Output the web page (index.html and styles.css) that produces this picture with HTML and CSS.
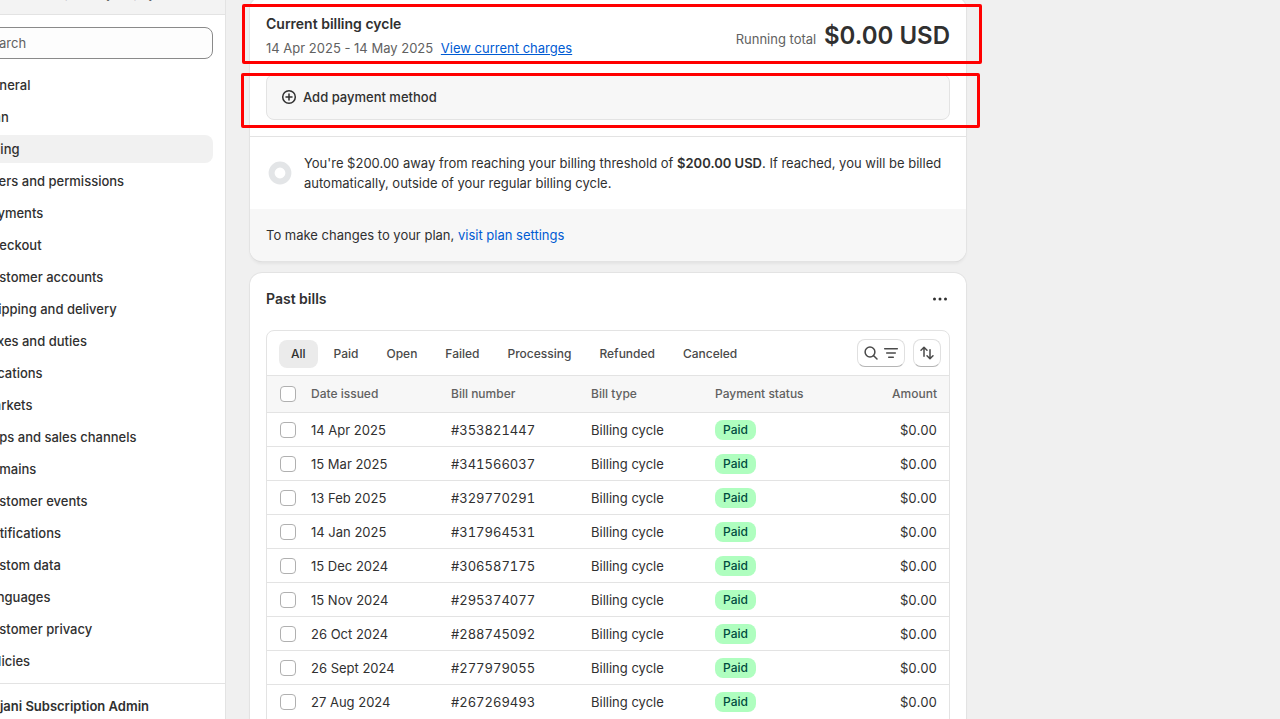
FILE: index.html
```html
<!DOCTYPE html>
<html lang="en">
<head>
  <meta charset="UTF-8" />
  <title>Settings - Billing</title>
  <meta name="viewport" content="width=device-width, initial-scale=1" />
  <link rel="stylesheet" href="styles.css">
</head>
<body>
  <div class="layout">
    <aside class="sidebar">
      <div class="store">shopdev.myshopify.com</div>
      <div class="search">
        <input type="text" aria-label="Search" placeholder="Search" />
      </div>
      <nav class="menu">
        <a href="#">General</a>
        <a href="#">Plan</a>
        <a href="#" class="active">Billing</a>
        <a href="#">Users and permissions</a>
        <a href="#">Payments</a>
        <a href="#">Checkout</a>
        <a href="#">Customer accounts</a>
        <a href="#">Shipping and delivery</a>
        <a href="#">Taxes and duties</a>
        <a href="#">Locations</a>
        <a href="#">Markets</a>
        <a href="#">Apps and sales channels</a>
        <a href="#">Domains</a>
        <a href="#">Customer events</a>
        <a href="#">Notifications</a>
        <a href="#">Custom data</a>
        <a href="#">Languages</a>
        <a href="#">Customer privacy</a>
        <a href="#">Policies</a>
      </nav>
      <div class="user">Rajani Subscription Admin</div>
    </aside>

    <main class="content">
      <section class="card cycle">
        <div class="cycle-head">
          <div>
            <h2>Current billing cycle</h2>
            <p class="dates"><span>14 Apr 2025 - 14 May 2025</span> <a href="#">View current charges</a></p>
          </div>
          <p class="total"><span>Running total</span> <strong>$0.00 USD</strong></p>
        </div>
        <button type="button" class="add-payment">
          <svg viewBox="0 0 16 16" width="16" height="16" fill="none" stroke="currentColor" stroke-width="1.5" stroke-linecap="round">
            <circle cx="8" cy="8" r="6.3" />
            <path d="M8 5v6M5 8h6" />
          </svg>
          Add payment method
        </button>
        <div class="threshold">
          <svg class="ring" viewBox="0 0 24 24" width="24" height="24" fill="none" stroke="#e3e5e7" stroke-width="6">
            <circle cx="12" cy="12" r="8.4" />
          </svg>
          <p>You're $200.00 away from reaching your billing threshold of <strong>$200.00 USD</strong>. If reached, you will be billed automatically, outside of your regular billing cycle.</p>
        </div>
        <div class="plan-note">To make changes to your plan, <a href="#">visit plan settings</a></div>
        <div class="mark mark-cycle"></div>
        <div class="mark mark-payment"></div>
      </section>

      <section class="card bills">
        <div class="bills-head">
          <h2>Past bills</h2>
          <button type="button" class="more" aria-label="More actions">
            <svg viewBox="0 0 20 20" width="20" height="20" fill="currentColor">
              <circle cx="4.5" cy="10" r="1.5" />
              <circle cx="10" cy="10" r="1.5" />
              <circle cx="15.5" cy="10" r="1.5" />
            </svg>
          </button>
        </div>
        <div class="panel">
          <div class="toolbar">
            <div class="tabs">
              <button type="button" class="selected">All</button>
              <button type="button">Paid</button>
              <button type="button">Open</button>
              <button type="button">Failed</button>
              <button type="button">Processing</button>
              <button type="button">Refunded</button>
              <button type="button">Canceled</button>
            </div>
            <div class="tools">
              <button type="button" aria-label="Search and filter">
                <svg viewBox="0 0 20 20" width="20" height="20" fill="none" stroke="currentColor" stroke-width="1.5" stroke-linecap="round">
                  <circle cx="9" cy="9" r="4.9" />
                  <path d="M12.7 12.7L16 16" />
                </svg>
                <svg viewBox="0 0 20 20" width="20" height="20" fill="none" stroke="currentColor" stroke-width="1.5" stroke-linecap="round">
                  <path d="M3.7 5.7h12.6M5.7 10h8.6M7.7 14.3h4.6" />
                </svg>
              </button>
              <button type="button" aria-label="Sort">
                <svg viewBox="0 0 20 20" width="20" height="20" fill="none" stroke="currentColor" stroke-width="1.5" stroke-linecap="round" stroke-linejoin="round">
                  <path d="M4 7.3L7 4.3L10 7.3M7 4.6v8.6M10 12.7l3 3l3-3M13 15.4V6.8" />
                </svg>
              </button>
            </div>
          </div>
          <table>
            <thead>
              <tr>
                <th class="check"><input type="checkbox" aria-label="Select all bills" /></th>
                <th class="date">Date issued</th>
                <th class="number">Bill number</th>
                <th class="type">Bill type</th>
                <th>Payment status</th>
                <th class="amount">Amount</th>
              </tr>
            </thead>
            <tbody>
              <tr><td class="check"><input type="checkbox" aria-label="Select bill #353821447" /></td><td>14 Apr 2025</td><td class="number">#353821447</td><td>Billing cycle</td><td><span class="badge">Paid</span></td><td class="amount">$0.00</td></tr>
              <tr><td class="check"><input type="checkbox" aria-label="Select bill #341566037" /></td><td>15 Mar 2025</td><td class="number">#341566037</td><td>Billing cycle</td><td><span class="badge">Paid</span></td><td class="amount">$0.00</td></tr>
              <tr><td class="check"><input type="checkbox" aria-label="Select bill #329770291" /></td><td>13 Feb 2025</td><td class="number">#329770291</td><td>Billing cycle</td><td><span class="badge">Paid</span></td><td class="amount">$0.00</td></tr>
              <tr><td class="check"><input type="checkbox" aria-label="Select bill #317964531" /></td><td>14 Jan 2025</td><td class="number">#317964531</td><td>Billing cycle</td><td><span class="badge">Paid</span></td><td class="amount">$0.00</td></tr>
              <tr><td class="check"><input type="checkbox" aria-label="Select bill #306587175" /></td><td>15 Dec 2024</td><td class="number">#306587175</td><td>Billing cycle</td><td><span class="badge">Paid</span></td><td class="amount">$0.00</td></tr>
              <tr><td class="check"><input type="checkbox" aria-label="Select bill #295374077" /></td><td>15 Nov 2024</td><td class="number">#295374077</td><td>Billing cycle</td><td><span class="badge">Paid</span></td><td class="amount">$0.00</td></tr>
              <tr><td class="check"><input type="checkbox" aria-label="Select bill #288745092" /></td><td>26 Oct 2024</td><td class="number">#288745092</td><td>Billing cycle</td><td><span class="badge">Paid</span></td><td class="amount">$0.00</td></tr>
              <tr><td class="check"><input type="checkbox" aria-label="Select bill #277979055" /></td><td>26 Sept 2024</td><td class="number">#277979055</td><td>Billing cycle</td><td><span class="badge">Paid</span></td><td class="amount">$0.00</td></tr>
              <tr><td class="check"><input type="checkbox" aria-label="Select bill #267269493" /></td><td>27 Aug 2024</td><td class="number">#267269493</td><td>Billing cycle</td><td><span class="badge">Paid</span></td><td class="amount">$0.00</td></tr>
            </tbody>
          </table>
        </div>
      </section>
    </main>
  </div>
</body>
</html>
```

FILE: styles.css
```css
:root {
  --bg: #f0f0f0;
  --text: #303030;
  --muted: #616161;
  --line: #e3e3e3;
  --soft: #f7f7f7;
  --link: #005bd3;
}

* {
  box-sizing: border-box;
}

body {
  margin: 0;
  height: 100vh;
  overflow: hidden;
  font-family: Inter, "Liberation Sans", sans-serif;
  font-size: 13px;
  line-height: 20px;
  color: var(--text);
  background: var(--bg);
}

h2, p {
  margin: 0;
}

h2 {
  font-size: 14px;
  font-weight: 600;
}

a {
  color: var(--link);
  text-decoration: none;
}

button, input {
  font: inherit;
  color: inherit;
}

button {
  cursor: pointer;
}

.layout {
  display: flex;
  align-items: flex-start;
}

/* sidebar, scrolled partly out of view */
.sidebar {
  flex: none;
  width: 264px;
  height: 760px;
  margin-left: -38px;
  margin-top: -18px;
  background: #fff;
  border-right: 1px solid var(--line);
}

.store {
  height: 33px;
  padding: 2px 0 0 82px;
  font-size: 12px;
  color: var(--muted);
  background: #f3f3f3;
  border-bottom: 1px solid var(--line);
}

.search {
  padding: 12px 12px 10px;
}

.search input {
  width: 100%;
  height: 32px;
  padding: 0 8px;
  border: 1px solid #8a8a8a;
  border-radius: 8px;
  background: #fdfdfd;
}

.search input::placeholder {
  color: var(--muted);
}

.menu {
  display: flex;
  flex-direction: column;
  gap: 4px;
  padding: 2px 12px 8px;
}

.menu a {
  padding: 4px 8px;
  border-radius: 8px;
  font-weight: 550;
  color: var(--text);
}

.menu .active {
  background: #f1f1f1;
}

.user {
  padding: 12px 22px;
  border-top: 1px solid var(--line);
  font-weight: 600;
}

.content {
  flex: 1;
  max-width: 764px;
  margin-top: -3px;
  padding: 0 24px;
}

.card {
  position: relative;
  margin-bottom: 12px;
  border-radius: 12px;
  background: #fff;
  box-shadow: 0 0 0 1px #e3e3e3, 0 1px 0 #ccc, 0 3px 3px rgba(0, 0, 0, 0.05);
}

.cycle-head {
  display: flex;
  justify-content: space-between;
  align-items: center;
  padding: 17px 16px 16px;
}

.dates {
  margin-top: 4px;
  color: var(--muted);
}

.dates a {
  margin-left: 4px;
  text-decoration: underline;
}

.total {
  padding-top: 2px;
  color: var(--muted);
}

.total strong {
  margin-left: 4px;
  font-size: 24px;
  font-weight: 600;
  color: var(--text);
}

.add-payment {
  display: flex;
  align-items: center;
  gap: 6px;
  width: calc(100% - 32px);
  height: 46px;
  margin: 0 16px 16px;
  padding: 0 14px;
  border: 1px solid var(--line);
  border-radius: 8px;
  background: var(--soft);
  font-weight: 550;
}

.threshold {
  display: flex;
  align-items: center;
  gap: 12px;
  padding: 16px 16px 16px 18px;
  border-top: 1px solid var(--line);
}

.threshold strong {
  font-weight: 600;
}

.ring {
  flex: none;
}

.plan-note {
  padding: 16px;
  border-radius: 0 0 12px 12px;
  background: var(--soft);
}

/* red highlight boxes over the card */
.mark {
  position: absolute;
  border: 3px solid #f00;
  border-radius: 2px;
  pointer-events: none;
}

.mark-cycle {
  top: 7px;
  left: -8px;
  right: -16px;
  height: 60px;
}

.mark-payment {
  top: 76px;
  left: -9px;
  right: -14px;
  height: 55px;
}

.bills {
  padding: 12px 16px 16px;
}

.bills-head {
  display: flex;
  justify-content: space-between;
  align-items: center;
  margin-bottom: 17px;
}

.more {
  display: flex;
  padding: 4px 0;
  border: 0;
  background: none;
}

.panel {
  border: 1px solid var(--line);
  border-radius: 8px 8px 0 0;
}

.toolbar {
  display: flex;
  justify-content: space-between;
  align-items: flex-end;
  padding: 8px 8px 8px 12px;
}

.tabs {
  display: flex;
  gap: 4px;
  margin: 1px 0 -1px;
}

.tabs button {
  padding: 4px 12px;
  border: 0;
  border-radius: 8px;
  background: none;
  font-size: 12px;
  font-weight: 550;
  color: #4a4a4a;
}

.tabs .selected {
  background: #ebebeb;
  color: var(--text);
}

.tools {
  display: flex;
  gap: 8px;
}

.tools button {
  display: flex;
  align-items: center;
  height: 28px;
  padding: 0 3px;
  border: 1px solid #e0e0e0;
  border-bottom-color: #b5b5b5;
  border-radius: 8px;
  background: #fff;
  color: #4a4a4a;
}

table {
  width: 100%;
  border-collapse: collapse;
  table-layout: fixed;
}

th, td {
  padding: 0;
  text-align: left;
  border-top: 1px solid var(--line);
}

th {
  height: 37px;
  font-size: 12px;
  font-weight: 550;
  color: var(--muted);
  background: var(--soft);
}

td {
  height: 34px;
}

.check {
  width: 44px;
  padding-left: 13px;
}

.date, .number {
  width: 140px;
}

.type {
  width: 124px;
}

td.number, td.amount {
  font-variant-numeric: tabular-nums;
}

th.amount {
  width: 100px;
}

.amount {
  padding-right: 12px;
  text-align: right;
}

input[type="checkbox"] {
  display: block;
  appearance: none;
  width: 16px;
  height: 16px;
  margin: 0;
  border: 1px solid #b0b0b0;
  border-radius: 4px;
  background: #fff;
}

.badge {
  display: inline-block;
  padding: 0 8px;
  border-radius: 8px;
  background: #affebf;
  color: #014b40;
  font-size: 12px;
  font-weight: 550;
}
```
